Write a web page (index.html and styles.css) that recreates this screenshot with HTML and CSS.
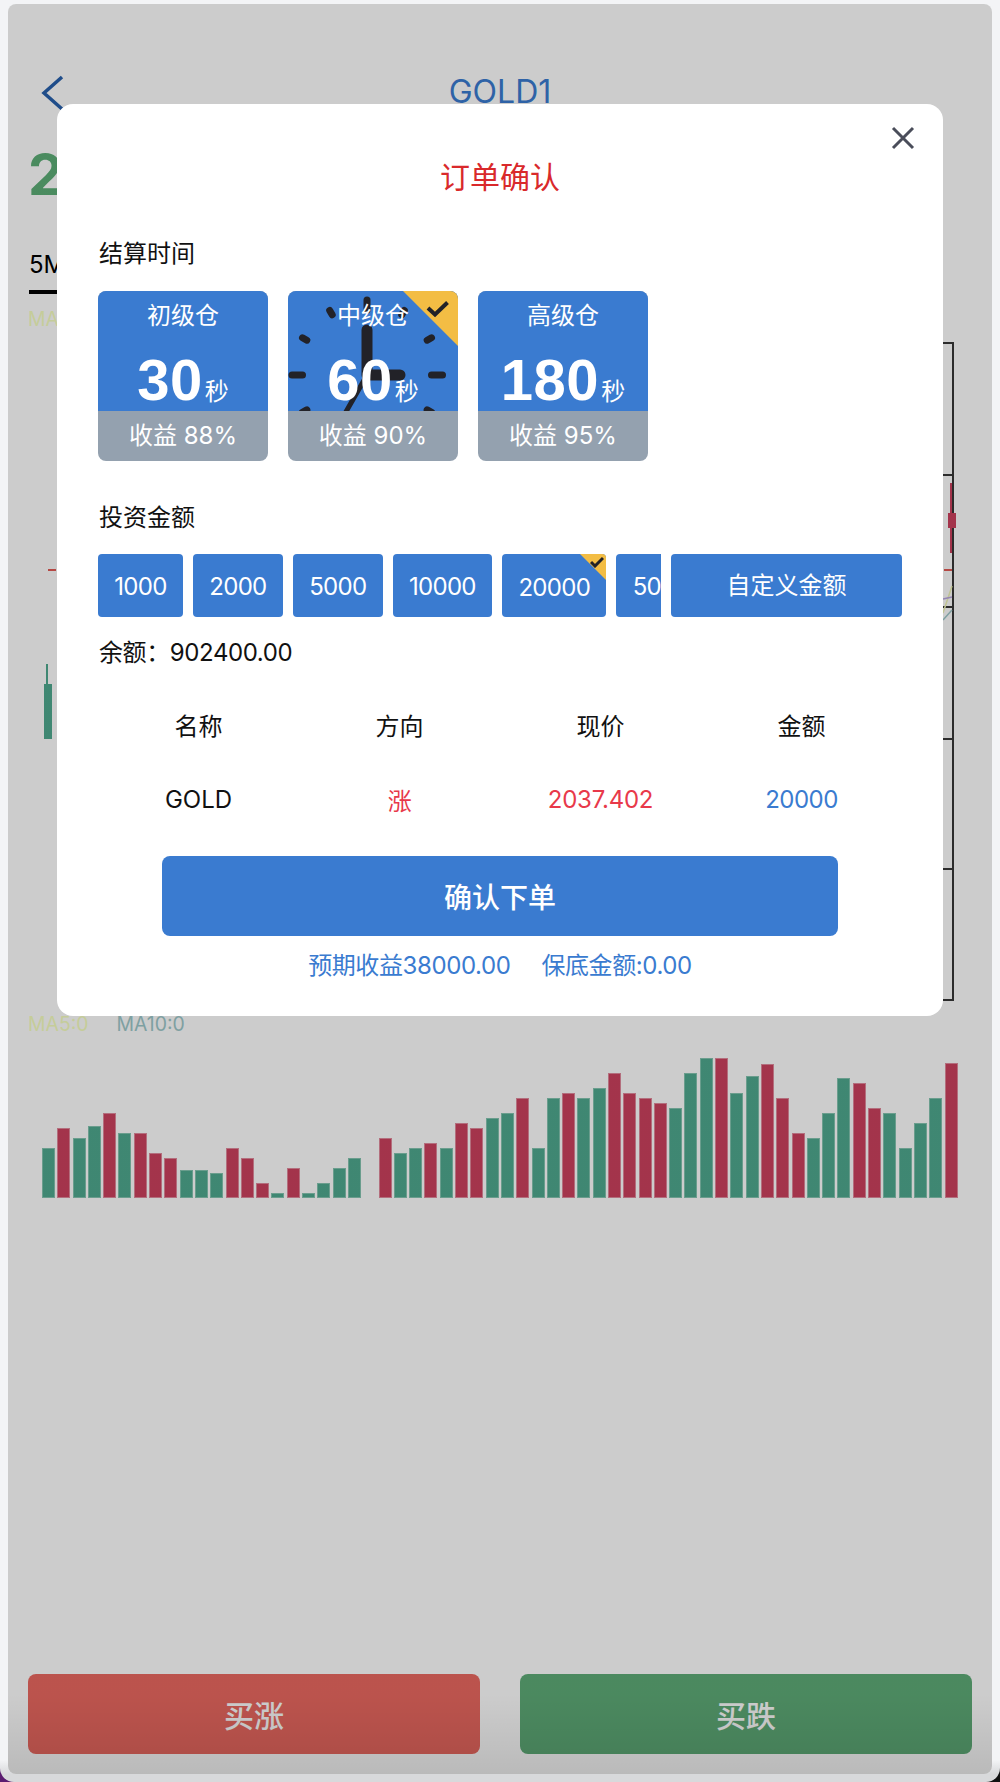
FILE: index.html
```html
<!DOCTYPE html>
<html lang="zh-CN">
<head>
    <meta charset="UTF-8">
    <meta name="viewport" content="width=device-width, initial-scale=1.0">
    <title>GOLD1</title>
    <link rel="stylesheet" href="styles.css">
</head>
<body>
    <div class="screen">
        <!-- Trade page -->
        <div class="page">
            <header class="top-bar">
                <svg class="back-icon" width="24" height="38" viewBox="0 0 24 38">
                    <path d="M21 3 L3 19 L21 35" fill="none" stroke="#2760ac" stroke-width="3.5"/>
                </svg>
                <span class="symbol">GOLD1</span>
            </header>
            <div class="last-price">2037.402</div>
            <div class="tabs"><span class="tab-active">5M</span></div>
            <div class="ma-row">MA5:0</div>

            <!-- K line chart -->
            <svg class="kline" width="984" height="660" viewBox="0 0 984 660">
                <path d="M935 1 H945 V658 H935 M935 133 H945 M935 265 H945 M935 397 H945 M935 527 H945" fill="none" stroke="#363636" stroke-width="2"/>
                <path d="M40 228 H48 M936 228 H944" stroke="#e25a55" stroke-width="2"/>
                <path d="M39 322 V397" stroke="#4fa98f" stroke-width="2"/>
                <rect x="36" y="342" width="8" height="55" fill="#4fa98f"/>
                <path d="M943 141 V211" stroke="#cc415e" stroke-width="2"/>
                <rect x="940" y="171" width="8" height="15" fill="#cc415e"/>
                <path d="M935 271 L944 244" fill="none" stroke="#f0f5b8" stroke-width="1.5"/>
                <path d="M935 257 L944 255" fill="none" stroke="#b9a6e0" stroke-width="1.5"/>
                <path d="M935 278 L944 268" fill="none" stroke="#9ec8ca" stroke-width="1.5"/>
            </svg>

            <div class="ma-row ma-row-volume">
                <span class="ma5">MA5:0</span>
                <span class="ma10">MA10:0</span>
            </div>

            <!-- Volume -->
            <div class="volume">
                <div class="bar up" style="height:50px"></div>
                <div class="bar down" style="height:70px"></div>
                <div class="bar up" style="height:60px"></div>
                <div class="bar up" style="height:72px"></div>
                <div class="bar down" style="height:85px"></div>
                <div class="bar up" style="height:65px"></div>
                <div class="bar down" style="height:65px"></div>
                <div class="bar down" style="height:45px"></div>
                <div class="bar down" style="height:40px"></div>
                <div class="bar up" style="height:28px"></div>
                <div class="bar up" style="height:28px"></div>
                <div class="bar up" style="height:25px"></div>
                <div class="bar down" style="height:50px"></div>
                <div class="bar down" style="height:40px"></div>
                <div class="bar down" style="height:15px"></div>
                <div class="bar up" style="height:5px"></div>
                <div class="bar down" style="height:30px"></div>
                <div class="bar up" style="height:5px"></div>
                <div class="bar up" style="height:15px"></div>
                <div class="bar up" style="height:30px"></div>
                <div class="bar up" style="height:40px"></div>
                <div class="bar gap"></div>
                <div class="bar down" style="height:60px"></div>
                <div class="bar up" style="height:45px"></div>
                <div class="bar up" style="height:50px"></div>
                <div class="bar down" style="height:55px"></div>
                <div class="bar up" style="height:50px"></div>
                <div class="bar down" style="height:75px"></div>
                <div class="bar down" style="height:70px"></div>
                <div class="bar up" style="height:80px"></div>
                <div class="bar up" style="height:85px"></div>
                <div class="bar down" style="height:100px"></div>
                <div class="bar up" style="height:50px"></div>
                <div class="bar up" style="height:100px"></div>
                <div class="bar down" style="height:105px"></div>
                <div class="bar up" style="height:100px"></div>
                <div class="bar up" style="height:110px"></div>
                <div class="bar down" style="height:125px"></div>
                <div class="bar down" style="height:105px"></div>
                <div class="bar down" style="height:100px"></div>
                <div class="bar down" style="height:95px"></div>
                <div class="bar up" style="height:90px"></div>
                <div class="bar up" style="height:125px"></div>
                <div class="bar up" style="height:140px"></div>
                <div class="bar down" style="height:140px"></div>
                <div class="bar up" style="height:105px"></div>
                <div class="bar up" style="height:122px"></div>
                <div class="bar down" style="height:134px"></div>
                <div class="bar down" style="height:100px"></div>
                <div class="bar down" style="height:65px"></div>
                <div class="bar up" style="height:60px"></div>
                <div class="bar up" style="height:85px"></div>
                <div class="bar up" style="height:120px"></div>
                <div class="bar down" style="height:115px"></div>
                <div class="bar down" style="height:90px"></div>
                <div class="bar up" style="height:85px"></div>
                <div class="bar up" style="height:50px"></div>
                <div class="bar up" style="height:75px"></div>
                <div class="bar up" style="height:100px"></div>
                <div class="bar down" style="height:135px"></div>
            </div>

            <div class="buy-row">
                <button class="buy-btn buy-up">买涨</button>
                <button class="buy-btn buy-down">买跌</button>
            </div>
        </div>

        <!-- Dim layer and order dialog -->
        <div class="overlay"></div>
        <div class="dialog">
            <svg class="close-icon" width="24" height="24" viewBox="0 0 24 24">
                <path d="M2 2 L22 22 M22 2 L2 22" fill="none" stroke="#4a4d5a" stroke-width="3"/>
            </svg>
            <h2 class="dialog-title">订单确认</h2>

            <div class="section-label">结算时间</div>
            <div class="plans">
                <div class="plan">
                    <div class="plan-top">
                        <div class="plan-name">初级仓</div>
                        <div class="plan-time"><b>30</b><span>秒</span></div>
                    </div>
                    <div class="plan-rate">收益 88%</div>
                </div>
                <div class="plan">
                    <div class="plan-top">
                        <!-- clock picture behind the selected plan -->
                        <svg class="clock" width="170" height="120" viewBox="0 0 170 120">
                            <g fill="none" stroke="#222228" stroke-linecap="round" stroke-width="7">
                                <path d="M79 9 V19"/>
                                <path d="M44.2 23.8 L41.7 19.5"/>
                                <path d="M113.8 23.8 L116.3 19.5"/>
                                <path d="M18.8 49.2 L14.5 46.8"/>
                                <path d="M139.2 49.2 L143.5 46.8"/>
                                <path d="M4 84 H14.5"/>
                                <path d="M143.5 84 H154.5"/>
                                <path d="M18.8 118.8 L14.5 121.2"/>
                                <path d="M139.2 118.8 L143.5 121.2"/>
                                <path d="M79 39 V84 H112" stroke-width="11" stroke-linejoin="round"/>
                                <path d="M79 84 L55 126" stroke-width="5"/>
                            </g>
                        </svg>
                        <div class="plan-name">中级仓</div>
                        <div class="plan-time"><b>60</b><span>秒</span></div>
                    </div>
                    <div class="plan-rate">收益 90%</div>
                    <div class="corner"></div>
                    <svg class="corner-check" width="24" height="20" viewBox="0 0 24 20">
                        <path d="M2 9 L9 15.5 L21.5 3.5" fill="none" stroke="#222228" stroke-width="4"/>
                    </svg>
                </div>
                <div class="plan">
                    <div class="plan-top">
                        <div class="plan-name">高级仓</div>
                        <div class="plan-time"><b>180</b><span>秒</span></div>
                    </div>
                    <div class="plan-rate">收益 95%</div>
                </div>
            </div>

            <div class="section-label section-label-amount">投资金额</div>
            <div class="amounts">
                <div class="amount-list">
                    <div class="amount">1000</div>
                    <div class="amount">2000</div>
                    <div class="amount">5000</div>
                    <div class="amount">10000</div>
                    <div class="amount amount-active">
                        20000
                        <svg class="amount-check" width="14" height="12" viewBox="0 0 14 12">
                            <path d="M1 6 L5 10 L13 2" fill="none" stroke="#222228" stroke-width="3"/>
                        </svg>
                    </div>
                    <div class="amount">50000</div>
                </div>
                <div class="amount-custom">自定义金额</div>
            </div>

            <div class="balance">余额：902400.00</div>

            <table class="order-table">
                <tr>
                    <th>名称</th>
                    <th>方向</th>
                    <th>现价</th>
                    <th>金额</th>
                </tr>
                <tr>
                    <td>GOLD</td>
                    <td class="red">涨</td>
                    <td class="red">2037.402</td>
                    <td class="blue">20000</td>
                </tr>
            </table>

            <button class="confirm-btn">确认下单</button>
            <div class="expect">
                <span>预期收益38000.00</span>
                <span>保底金额:0.00</span>
            </div>
        </div>
    </div>
</body>
</html>
```

FILE: styles.css
```css
* {
    box-sizing: border-box;
}

body {
    margin: 0;
    /* desktop wallpaper showing at the window's bottom corners */
    background: linear-gradient(90deg, #5b1c70 50%, #111 50%);
    font-family: "Inter", "Noto Sans CJK SC", sans-serif;
}

.screen {
    position: relative;
    width: 1000px;
    height: 1782px;
    padding: 4px 8px 8px;
    border-radius: 0 0 14px 14px;
    overflow: hidden;
    background: linear-gradient(#f3f4f6 1760px, #d8d9db 1774px);
}

/* Trade page */
.page {
    display: flex;
    flex-direction: column;
    height: 1770px;
    padding: 0 20px;
    background: #fff;
    border-radius: 8px;
    position: relative;
}

.top-bar {
    position: relative;
    display: flex;
    justify-content: center;
    align-items: center;
    height: 44px;
    margin-top: 65px;
    color: #3a7bd0;
}

.back-icon {
    position: absolute;
    left: 13px;
    top: 5px;
}

.symbol {
    font-size: 32px;
}

.last-price {
    margin-top: 32px;
    font-size: 56px;
    font-weight: 700;
    line-height: 60px;
    color: #5dae77;
}

.tabs {
    display: flex;
    margin-top: 45px;
}

.tab-active {
    width: 60px;
    margin-left: 1px;
    padding: 0 0 10px;
    font-size: 24px;
    line-height: 30px;
    color: #000;
    border-bottom: 4px solid #000;
}

.ma-row {
    display: flex;
    gap: 28px;
    margin-top: 12px;
    font-size: 19.4px;
    line-height: 26px;
    color: #f6ffc0;
}

.kline {
    display: block;
    flex: none;
    margin: 10px -20px 0;
}

.ma-row-volume {
    margin-top: 9px;
}

.ma10 {
    color: #9ec8ca;
}

.volume {
    display: flex;
    justify-content: space-between;
    align-items: flex-end;
    height: 150px;
    margin: 11px 14px 0;
}

.bar {
    width: 13px;
    border: 1px solid;
}

.bar.up {
    background: #4fa98f;
    border-color: #84c4b0;
}

.bar.down {
    background: #cc415e;
    border-color: #e08a9c;
}

.bar.gap {
    border: 0;
}

.buy-row {
    display: flex;
    justify-content: space-between;
    margin-top: auto;
    margin-bottom: 20px;
}

.buy-btn {
    width: 452px;
    height: 80px;
    border: 0;
    border-radius: 8px;
    font-family: inherit;
    font-size: 30px;
    font-weight: 500;
    color: #fff;
}

.buy-up {
    background: #ea6860;
}

.buy-down {
    background: #5eab77;
}

.overlay {
    position: absolute;
    left: 8px;
    top: 4px;
    width: 984px;
    height: 1770px;
    border-radius: 8px;
    background: linear-gradient(rgba(0, 0, 0, 0.2) 1690px, rgba(0, 0, 0, 0.27) 1770px);
}

/* Order dialog */
.dialog {
    position: absolute;
    left: 57px;
    top: 104px;
    width: 886px;
    height: 912px;
    padding: 0 41px;
    background: #fff;
    border-radius: 16px;
}

.close-icon {
    position: absolute;
    right: 28px;
    top: 22px;
}

.dialog-title {
    margin: 0;
    padding-top: 51px;
    font-size: 30px;
    font-weight: 400;
    line-height: 44px;
    text-align: center;
    color: #d9292b;
}

.section-label {
    margin: 38px 0 0 1px;
    font-size: 24px;
    line-height: 34px;
    color: #111;
}

.section-label-amount {
    margin-top: 40px;
}

.plans {
    display: flex;
    gap: 20px;
    margin-top: 20px;
}

.plan {
    position: relative;
    width: 170px;
    height: 170px;
    border-radius: 8px;
    overflow: hidden;
    background: #94a1af;
    color: #fff;
}

.plan-top {
    position: relative;
    height: 120px;
    overflow: hidden;
    background: #3a7bd0;
    text-align: center;
}

.clock {
    position: absolute;
    left: 0;
    top: 0;
}

.plan-name {
    position: relative;
    padding-top: 8px;
    font-size: 24px;
    line-height: 34px;
}

.plan-time {
    position: relative;
    display: flex;
    justify-content: center;
    align-items: baseline;
    margin-top: 13px;
}

.plan-time b {
    font-family: "Liberation Sans", sans-serif;
    font-size: 58px;
    letter-spacing: 0.5px;
    line-height: 68px;
}

.plan-time span {
    margin-left: 2px;
    font-size: 24px;
}

.plan-rate {
    height: 50px;
    font-size: 24px;
    line-height: 50px;
    text-align: center;
}

.corner {
    position: absolute;
    right: 0;
    top: 0;
    width: 0;
    height: 0;
    border-top: 55px solid #f3bd44;
    border-left: 55px solid transparent;
}

.corner-check {
    position: absolute;
    right: 8px;
    top: 8px;
}

.amounts {
    display: flex;
    gap: 10px;
    margin-top: 19px;
}

.amount-list {
    display: flex;
    gap: 10px;
    width: 563px;
    overflow: hidden;
}

.amount {
    position: relative;
    flex: none;
    height: 63px;
    padding: 0 16.3px;
    border-radius: 4px;
    background: #3a7bd0;
    font-size: 24px;
    letter-spacing: -0.7px;
    line-height: 66px;
    color: #fff;
}

.amount-active {
    overflow: hidden;
    line-height: 68px;
}

.amount-active::after {
    content: "";
    position: absolute;
    right: 0;
    top: 0;
    border-top: 26px solid #f3bd44;
    border-left: 26px solid transparent;
}

.amount-check {
    position: absolute;
    right: 2px;
    top: 2px;
    z-index: 1;
}

.amount-custom {
    width: 231px;
    height: 63px;
    border-radius: 4px;
    background: #3a7bd0;
    font-size: 24px;
    line-height: 63px;
    text-align: center;
    color: #fff;
}

.balance {
    margin: 19px 0 0 1px;
    font-size: 24px;
    letter-spacing: -0.4px;
    line-height: 34px;
    color: #111;
}

.order-table {
    width: 804px;
    margin-top: 21px;
    border-collapse: collapse;
    table-layout: fixed;
}

.order-table th,
.order-table td {
    padding: 0;
    font-size: 24px;
    font-weight: 400;
    text-align: center;
    color: #111;
}

.order-table th {
    height: 66px;
}

.order-table td {
    height: 84px;
}

.order-table .red {
    color: #e8394a;
    letter-spacing: -0.25px;
}

.order-table .blue {
    color: #3a7bd0;
    letter-spacing: -0.5px;
}

.confirm-btn {
    display: block;
    width: 676px;
    height: 80px;
    margin: 15px auto 0;
    border: 0;
    border-radius: 8px;
    background: #3a7bd0;
    font-family: inherit;
    font-size: 28px;
    font-weight: 500;
    color: #fff;
}

.expect {
    display: flex;
    justify-content: center;
    gap: 31px;
    margin-top: 13px;
    font-size: 24px;
    letter-spacing: -0.4px;
    line-height: 34px;
    color: #3a7bd0;
}
```
